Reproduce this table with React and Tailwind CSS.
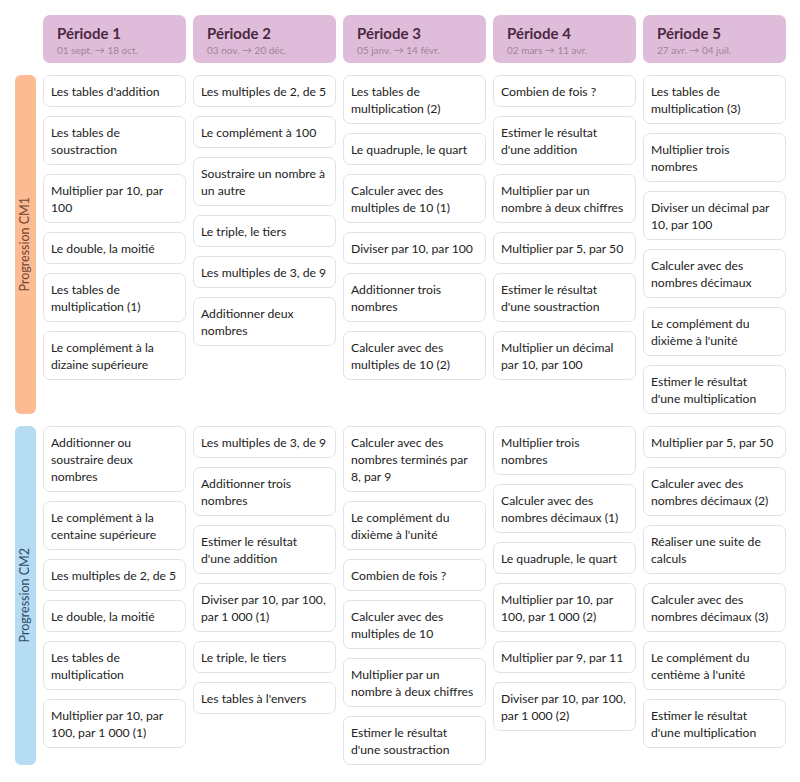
const periods = [
  { title: 'Période 1', dates: '01 sept. → 18 oct.' },
  { title: 'Période 2', dates: '03 nov. → 20 déc.' },
  { title: 'Période 3', dates: '05 janv. → 14 févr.' },
  { title: 'Période 4', dates: '02 mars → 11 avr.' },
  { title: 'Période 5', dates: '27 avr. → 04 juil.' },
];

const groups = [
  {
    label: 'Progression CM1',
    bar: 'bg-[#fdbb94] text-[#6e4630]',
    columns: [
      [
        "Les tables d'addition",
        'Les tables de soustraction',
        'Multiplier par 10, par 100',
        'Le double, la moitié',
        'Les tables de multiplication (1)',
        'Le complément à la dizaine supérieure',
      ],
      [
        'Les multiples de 2, de 5',
        'Le complément à 100',
        'Soustraire un nombre à un autre',
        'Le triple, le tiers',
        'Les multiples de 3, de 9',
        'Additionner deux nombres',
      ],
      [
        'Les tables de multiplication (2)',
        'Le quadruple, le quart',
        'Calculer avec des multiples de 10 (1)',
        'Diviser par 10, par 100',
        'Additionner trois nombres',
        'Calculer avec des multiples de 10 (2)',
      ],
      [
        'Combien de fois ?',
        "Estimer le résultat d'une addition",
        'Multiplier par un nombre à deux chiffres',
        'Multiplier par 5, par 50',
        "Estimer le résultat d'une soustraction",
        'Multiplier un décimal par 10, par 100',
      ],
      [
        'Les tables de multiplication (3)',
        'Multiplier trois nombres',
        'Diviser un décimal par 10, par 100',
        'Calculer avec des nombres décimaux',
        "Le complément du dixième à l'unité",
        "Estimer le résultat d'une multiplication",
      ],
    ],
  },
  {
    label: 'Progression CM2',
    bar: 'bg-[#b5dcf2] text-[#2c4f68]',
    columns: [
      [
        'Additionner ou soustraire deux nombres',
        'Le complément à la centaine supérieure',
        'Les multiples de 2, de 5',
        'Le double, la moitié',
        'Les tables de multiplication',
        'Multiplier par 10, par 100, par 1 000 (1)',
      ],
      [
        'Les multiples de 3, de 9',
        'Additionner trois nombres',
        "Estimer le résultat d'une addition",
        'Diviser par 10, par 100, par 1 000 (1)',
        'Le triple, le tiers',
        "Les tables à l'envers",
      ],
      [
        'Calculer avec des nombres terminés par 8, par 9',
        "Le complément du dixième à l'unité",
        'Combien de fois ?',
        'Calculer avec des multiples de 10',
        'Multiplier par un nombre à deux chiffres',
        "Estimer le résultat d'une soustraction",
      ],
      [
        'Multiplier trois nombres',
        'Calculer avec des nombres décimaux (1)',
        'Le quadruple, le quart',
        'Multiplier par 10, par 100, par 1 000 (2)',
        'Multiplier par 9, par 11',
        'Diviser par 10, par 100, par 1 000 (2)',
      ],
      [
        'Multiplier par 5, par 50',
        'Calculer avec des nombres décimaux (2)',
        'Réaliser une suite de calculs',
        'Calculer avec des nombres décimaux (3)',
        "Le complément du centième à l'unité",
        "Estimer le résultat d'une multiplication",
      ],
    ],
  },
];

function Card({ text }) {
  return (
    <div className="rounded-[7px] border border-[#e1e1ea] bg-white py-[6.5px] pl-[7px] pr-[8px] text-[12.2px] leading-[17px] text-[#222]">
      {text}
    </div>
  );
}

export default function App() {
  return (
    <div className="min-h-[782px] bg-white pl-[15px] pt-[15px] font-['Lato',sans-serif]">
      <div className="grid grid-cols-[21px_repeat(5,143px)] gap-x-[7px] gap-y-[12px]">
        <div />
        {periods.map((p) => (
          <div key={p.title} className="h-[48px] rounded-[7px] bg-[#dfbcd9] pl-[14px] pt-[8px]">
            <p className="text-[15px] font-bold leading-[20px] text-[#4b2942]">{p.title}</p>
            <p className="text-[10px] leading-[14px] text-[#a0849a]">{p.dates}</p>
          </div>
        ))}

        {groups.map((g) => (
          <div key={g.label} className="contents">
            <div className={`flex items-center justify-center rounded-[6px] ${g.bar}`}>
              <span className="-rotate-90 whitespace-nowrap text-[12.5px] leading-none">{g.label}</span>
            </div>
            {g.columns.map((col, i) => (
              <div key={i} className="flex flex-col gap-[9px]">
                {col.map((t) => (
                  <Card key={t} text={t} />
                ))}
              </div>
            ))}
          </div>
        ))}
      </div>
    </div>
  );
}
